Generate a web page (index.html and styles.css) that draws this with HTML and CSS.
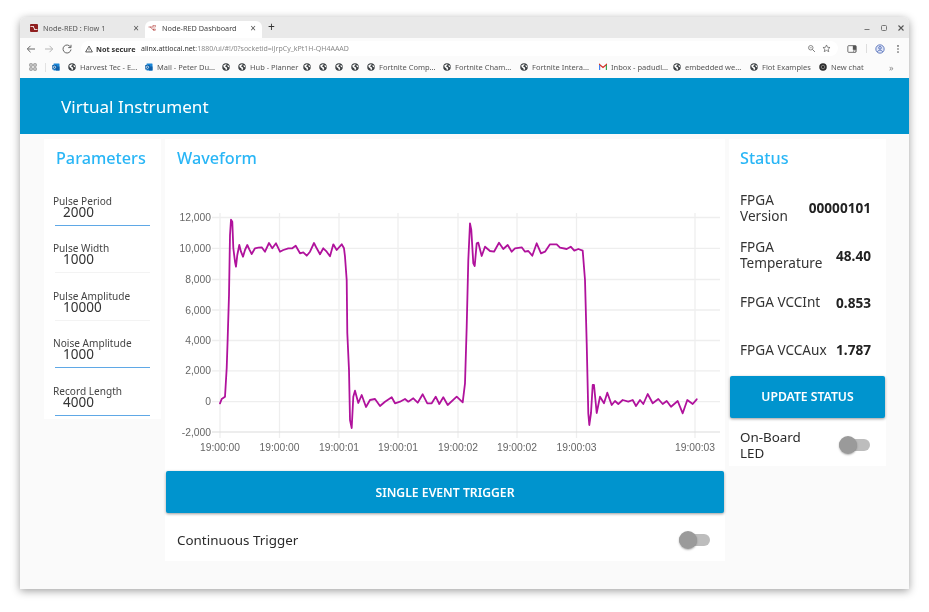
FILE: index.html
```html
<!DOCTYPE html>
<html lang="en">
<head>
<meta charset="utf-8">
<title>Node-RED Dashboard</title>
<link rel="stylesheet" href="styles.css">
</head>
<body>
<svg class="defs" width="0" height="0" aria-hidden="true">
  <symbol id="globe" viewBox="0 0 16 16">
    <circle cx="8" cy="8" r="7.5" fill="#3c4043"/>
    <path d="M2.5 5 L6 3 L9 2.2 L8.5 4.5 L6.5 6 L7 8 L9.5 8.5 L10.5 11 L9 14 L7.5 13.5 L6.5 10.5 L3.5 8.5Z M11 4 L14 5.5 L14.6 9 L12.8 8 L11 6.5Z" fill="#fff"/>
  </symbol>
  <symbol id="outlook" viewBox="0 0 16 16">
    <rect x="3" y="1" width="12" height="14" rx="1" fill="#1a86d8"/>
    <rect x="8" y="7" width="7" height="8" fill="#0f5fa8"/>
    <rect x="0.5" y="4" width="9" height="9" rx="1" fill="#0a5ea8"/>
    <circle cx="5" cy="8.5" r="2.3" fill="none" stroke="#fff" stroke-width="1.4"/>
  </symbol>
</svg>
<div class="window">
  <div class="tabstrip">
    <div class="tab">
      <svg class="favicon" viewBox="0 0 16 16"><rect width="16" height="16" rx="2" fill="#8f1f1f"/><path d="M1 5h4c3 0 3 6 6 6h4M5 5h3M8 11h3" stroke="#fff" stroke-width="1.6" fill="none"/></svg>
      <span class="tab-title">Node-RED : Flow 1</span>
      <span class="tab-x">×</span>
    </div>
    <div class="tab tab-active">
      <svg class="favicon" viewBox="0 0 16 16"><path d="M1 6h3c3 0 3 5 6 5h3M4 6h6" stroke="#b5433f" stroke-width="1.3" fill="none"/><rect x="10" y="3" width="5" height="3" fill="none" stroke="#b5433f"/><rect x="11" y="10" width="4" height="3" fill="none" stroke="#b5433f"/></svg>
      <span class="tab-title">Node-RED Dashboard</span>
      <span class="tab-x">×</span>
    </div>
    <span class="tab-plus">+</span>
    <div class="win-controls">
      <svg class="win-icon" viewBox="0 0 10 10"><path d="M2.5 6.5h5" stroke="#777" stroke-width="1"/></svg>
      <svg class="win-icon" viewBox="0 0 10 10"><rect x="2.5" y="2.5" width="5" height="5" rx="1" fill="none" stroke="#777"/></svg>
      <svg class="win-icon" viewBox="0 0 10 10"><path d="M2.5 2.5l5 5M7.5 2.5l-5 5" stroke="#555" stroke-width="1.1"/></svg>
    </div>
  </div>
  <div class="toolbar">
    <svg class="nav-icon" viewBox="0 0 12 12"><path d="M10 6H2.5M5.5 2.8L2.3 6l3.2 3.2" stroke="#666" stroke-width="1" fill="none"/></svg>
    <svg class="nav-icon" viewBox="0 0 12 12"><path d="M2 6h7.5M6.5 2.8L9.7 6 6.5 9.2" stroke="#b5b5b5" stroke-width="1" fill="none"/></svg>
    <svg class="nav-icon" viewBox="0 0 12 12"><path d="M9.6 4.2A4 4 0 1 0 10 6.5M10 1.8v2.8H7.2" stroke="#666" stroke-width="1" fill="none"/></svg>
    <div class="omnibox">
      <span class="secure-chip">
        <svg class="warn" viewBox="0 0 10 10"><path d="M5 1.3L9.2 8.7H.8Z" fill="none" stroke="#333" stroke-width="1"/><path d="M5 4v2.4M5 7v.8" stroke="#333" stroke-width=".8"/></svg>
        <b>Not secure</b>
      </span>
      <span class="url"><span class="url-host">alinx.attlocal.net</span>:1880/ui/#!/0?socketid=iJrpCy_kPt1H-QH4AAAD</span>
      <svg class="omni-icon omni-first" viewBox="0 0 12 12"><circle cx="5" cy="5" r="3" fill="none" stroke="#666"/><path d="M7.3 7.3L10.5 10.5" stroke="#666" stroke-width="1.2"/><path d="M3.6 5h2.8" stroke="#666" stroke-width=".8"/></svg>
      <svg class="omni-icon" viewBox="0 0 12 12"><path d="M6 1.3l1.4 3.1 3.3.3-2.5 2.2.8 3.3L6 8.5 3 10.2l.8-3.3L1.3 4.7l3.3-.3Z" fill="none" stroke="#555" stroke-width=".9"/></svg>
    </div>
    <svg class="tool-icon tool-panel" viewBox="0 0 12 12"><rect x="1" y="2" width="10" height="8" rx="1" fill="none" stroke="#555"/><rect x="7" y="2" width="4" height="5" fill="#555"/><circle cx="9" cy="8.6" r="1.3" fill="#fff" stroke="#555" stroke-width=".7"/></svg>
    <span class="tool-sep"></span>
    <svg class="tool-icon" viewBox="0 0 12 12"><circle cx="6" cy="6" r="5" fill="#dfe6f7" stroke="#4a66b5"/><circle cx="6" cy="4.6" r="1.6" fill="none" stroke="#4a66b5"/><path d="M2.9 9.4c1-2.6 5.200-2.600 6.200 0" fill="none" stroke="#4a66b5"/></svg>
    <svg class="tool-icon tool-menu" viewBox="0 0 12 12"><circle cx="6" cy="2.300" r="1" fill="#555"/><circle cx="6" cy="6" r="1" fill="#555"/><circle cx="6" cy="9.700" r="1" fill="#555"/></svg>
  </div>
  <div class="bookmarks">
    <svg class="apps" viewBox="0 0 10 10"><path d="M1 1h3v3H1zM6 1h3v3H6zM1 6h3v3H1zM6 6h3v3H6z" fill="none" stroke="#555" stroke-width=".8"/></svg>
    <span class="bm-sep"></span>
    <svg class="bm-icon"><use href="#outlook"/></svg>
    <svg class="bm-icon"><use href="#globe"/></svg><span class="bm-label">Harvest Tec - E...</span>
    <svg class="bm-icon"><use href="#outlook"/></svg><span class="bm-label">Mail - Peter Du...</span>
    <svg class="bm-icon"><use href="#globe"/></svg>
    <svg class="bm-icon"><use href="#globe"/></svg><span class="bm-label bm-hub">Hub - Planner</span>
    <svg class="bm-icon"><use href="#globe"/></svg>
    <svg class="bm-icon"><use href="#globe"/></svg>
    <svg class="bm-icon"><use href="#globe"/></svg>
    <svg class="bm-icon"><use href="#globe"/></svg>
    <svg class="bm-icon"><use href="#globe"/></svg><span class="bm-label bm-comp">Fortnite Comp...</span>
    <svg class="bm-icon"><use href="#globe"/></svg><span class="bm-label">Fortnite Cham...</span>
    <svg class="bm-icon"><use href="#globe"/></svg><span class="bm-label bm-intera">Fortnite Intera...</span>
    <svg class="bm-icon" viewBox="0 0 16 16"><path d="M1 14V3l7 6 7-6v11" fill="none" stroke="#d93025" stroke-width="2.400"/><path d="M1 14V4" stroke="#4285f4" stroke-width="2.400"/><path d="M15 14V4" stroke="#34a853" stroke-width="2.400"/></svg><span class="bm-label bm-inbox">Inbox - padudl...</span>
    <svg class="bm-icon"><use href="#globe"/></svg><span class="bm-label">embedded we...</span>
    <svg class="bm-icon"><use href="#globe"/></svg><span class="bm-label bm-flot">Flot Examples</span>
    <svg class="bm-icon" viewBox="0 0 16 16"><circle cx="8" cy="8" r="7.500" fill="#2b2b2b"/><circle cx="8" cy="8" r="3.500" fill="none" stroke="#999" stroke-width="1.500"/></svg><span class="bm-label bm-chat">New chat</span>
    <span class="bm-more">»</span>
  </div>
  <header class="app-header">Virtual Instrument</header>
  <main class="dashboard">
    <section class="card card-params">
      <h2 class="card-title card-title-params">Parameters</h2>
      <div class="field"><label class="field-label">Pulse Period</label><div class="field-value">2000</div></div>
      <div class="field"><label class="field-label">Pulse Width</label><div class="field-value field-idle">1000</div></div>
      <div class="field"><label class="field-label">Pulse Amplitude</label><div class="field-value field-idle">10000</div></div>
      <div class="field"><label class="field-label">Noise Amplitude</label><div class="field-value">1000</div></div>
      <div class="field field-last"><label class="field-label">Record Length</label><div class="field-value">4000</div></div>
    </section>

    <section class="card card-wave">
      <h2 class="card-title card-title-wave">Waveform</h2>
      <svg class="chart" viewBox="165 205 560 260">
        <g class="grid">
          <path d="M212 217.500H720M212 248.300H720M212 279.500H720M212 310H720M212 340.500H720M212 370.800H720M212 401.600H720"/>
          <path d="M220 213V438M279.500 213V438M339 213V438M398 213V438M458 213V438M517 213V438M576.500 213V438M695 213V438"/>
        </g>
        <path class="axis" d="M212 432H720"/>
        <g class="tick tick-y">
          <text x="211" y="217.500">12,000</text>
          <text x="211" y="248.300">10,000</text>
          <text x="211" y="279.500">8,000</text>
          <text x="211" y="310">6,000</text>
          <text x="211" y="340.500">4,000</text>
          <text x="211" y="370.800">2,000</text>
          <text x="211" y="401.600">0</text>
          <text x="211" y="432">-2,000</text>
        </g>
        <g class="tick tick-x">
          <text x="220" y="451">19:00:00</text>
          <text x="279.500" y="451">19:00:00</text>
          <text x="339" y="451">19:00:01</text>
          <text x="398" y="451">19:00:01</text>
          <text x="458" y="451">19:00:02</text>
          <text x="517" y="451">19:00:02</text>
          <text x="576.500" y="451">19:00:03</text>
          <text x="695" y="451">19:00:03</text>
        </g>
        <polyline class="trace" points="220,403.300 221.700,399 225,396.700 226.700,368 227.700,338 229,295 230,235 231,219.700 232.300,221.700 233.300,248 235,261.700 236,266.700 237.300,255 239.300,245 241,251.700 243,256.700 245,250 247.300,245 249.300,249.300 251.700,254 255,248.300 258.300,247.700 261.700,247.300 265,251.700 269,243 272.300,248.300 276,243.300 280,251.700 283.300,250 288.300,248.300 292.300,248.300 295.700,245.700 300,253.300 303.300,252.300 306.700,255.700 310,251.700 314,243 316.700,248.300 320,254.300 323.300,248.300 326.700,251.700 330,256.300 333.300,244.300 336.700,250 341.700,244.300 344,248.300 345,256.700 346.700,280 347.300,333 349,370 350,420 351.700,428 353.300,396.700 355,390.700 358.300,403 361.700,395 366,407 370,400 375,399 380,406 385,401.700 391.700,397.300 395,403.300 400,401.700 405,399 408.300,401.700 413.300,398.300 417.700,402.700 422.700,394.300 427.300,403.300 431.700,403.300 435.700,396.700 439.300,404 443.300,397.300 447.700,405 456.700,396.700 462.700,402.300 465,383.300 466.700,326.700 468.300,260 470,223.300 471.300,230 473.300,263.300 474.700,266 476.700,243.300 478.300,242.700 481.700,256 485,246.700 490,251 494,251.700 499,242.700 503.300,249 507.700,245 511.700,251.700 515,248.300 521.700,247.300 525,251.700 528.300,251 532.300,255.700 536.700,243.300 541,253.300 545,251.700 550,244.300 556.700,244.300 560,247.700 566.700,249 570.700,246.700 574.300,250.700 578.300,249 582.700,250.700 585,280 586.700,343.300 588.300,413.300 589.300,425 591,413 592.700,385 594,385 596.700,413 600,396.700 604,403.300 607.300,392.700 611.700,405 615,401 618.300,404 622.700,400 628.300,401.700 632.700,400 636,406 640,400 643.300,404 647.700,394 652.700,403.300 658.300,399 662.700,404 666.700,401 671,406.700 677.700,401 682.700,413.300 687.300,400 692.700,404 696.700,399.300"/>
      </svg>
      <button class="btn btn-trigger">SINGLE EVENT TRIGGER</button>
      <div class="switch-row switch-row-wide">
        <span class="switch-text">Continuous Trigger</span>
        <span class="toggle"><span class="toggle-knob"></span></span>
      </div>
    </section>

    <section class="card card-status">
      <h2 class="card-title card-title-status">Status</h2>
      <div class="stat"><span class="stat-label">FPGA<br>Version</span><b class="stat-value">00000101</b></div>
      <div class="stat"><span class="stat-label">FPGA<br>Temperature</span><b class="stat-value">48.40</b></div>
      <div class="stat"><span class="stat-label">FPGA VCCInt</span><b class="stat-value">0.853</b></div>
      <div class="stat"><span class="stat-label">FPGA VCCAux</span><b class="stat-value">1.787</b></div>
      <button class="btn btn-status">UPDATE STATUS</button>
      <div class="switch-row switch-row-status">
        <span class="switch-text switch-text-lines">On-Board<br>LED</span>
        <span class="toggle"><span class="toggle-knob"></span></span>
      </div>
    </section>
  </main>
</div>
</body>
</html>
```

FILE: styles.css
```css
* { box-sizing: border-box; }
html, body { margin: 0; height: 100%; }
body {
  background: #fff;
  padding: 17px 20px 0;
  overflow: hidden;
  font-family: "Noto Sans", "Open Sans", sans-serif;
  color: #222;
}
.defs { display: block; height: 0; }

.window {
  width: 889px;
  height: 572px;
  display: flex;
  flex-direction: column;
  border-radius: 6px 6px 0 0;
  background: #fafafa;
  box-shadow: 0 2px 9px rgba(0, 0, 0, .38);
  overflow: hidden;
  filter: blur(.3px);
}

/* tab strip */
.tabstrip {
  height: 21px;
  flex: none;
  background: #e9e9e9;
  display: flex;
  align-items: flex-end;
  padding-left: 4px;
}
.tab {
  height: 17px;
  width: 121px;
  display: flex;
  align-items: center;
  padding: 0 0 4px 6px;
  font-size: 7.300px;
  color: #555;
}
.tab-active {
  width: 117px;
  background: #fff;
  border-radius: 6px 6px 0 0;
  padding-left: 3px;
  color: #444;
}
.favicon { width: 8px; height: 8px; flex: none; }
.tab-title { margin-left: 5px; white-space: nowrap; flex: 1; }
.tab-active .tab-title { margin-left: 6px; }
.tab-x { width: 8px; margin-right: 5px; font-size: 10px; line-height: 10px; text-align: center; color: #555; }
.tab-plus { height: 17px; line-height: 12px; margin-left: 6px; font-size: 12px; color: #333; }
.win-controls { margin-left: auto; height: 21px; display: flex; align-items: center; gap: 7px; padding-right: 3px; }
.win-icon { width: 10px; height: 10px; }

/* toolbar */
.toolbar {
  height: 20px;
  flex: none;
  background: #fbfbfb;
  display: flex;
  align-items: center;
  padding: 1px 0 0 5px;
}
.nav-icon { width: 12px; height: 12px; margin-right: 6px; flex: none; }
.omnibox {
  margin-left: 2px;
  width: 757px;
  height: 15px;
  border-radius: 8px;
  background: #fff;
  display: flex;
  align-items: center;
  flex: none;
}
.secure-chip { display: flex; align-items: center; width: 60px; padding-left: 4px; font-size: 7.300px; color: #333; flex: none; }
.secure-chip b { margin-left: 3px; white-space: nowrap; font-weight: 700; }
.warn { width: 8px; height: 8px; flex: none; }
.url { font-size: 7px; color: #8a8a8a; white-space: nowrap; flex: 1; }
.url-host { color: #333; }
.omni-icon { width: 9px; height: 9px; margin-right: 7px; flex: none; }
.omni-first { margin-right: 6px; }
.tool-icon { width: 10px; height: 10px; flex: none; }
.tool-panel { margin-left: 9px; }
.tool-sep { width: 1px; height: 9px; background: #ddd; margin: 0 8px 0 9px; flex: none; }
.tool-menu { margin-left: 8px; }

/* bookmarks */
.bookmarks {
  height: 20px;
  flex: none;
  background: #fbfbfb;
  display: flex;
  align-items: center;
  padding: 0 0 2px 9px;
  font-size: 7.500px;
  color: #555;
}
.apps { width: 8px; height: 8px; flex: none; }
.bm-sep { width: 1px; height: 9px; background: #e2e2e2; margin: 0 6px 0 8px; flex: none; }
.bm-icon { width: 8px; height: 8px; flex: none; margin-right: 8px; }
.bm-label { width: 57px; margin: 0 8px 0 -4px; white-space: nowrap; flex: none; }
.bm-hub { width: 45px; }
.bm-comp { width: 56px; }
.bm-intera { width: 59px; }
.bm-inbox { width: 54px; }
.bm-flot { width: 49px; }
.bm-chat { width: 32px; }
.bm-more { margin-left: 18px; font-size: 9px; color: #888; }

/* header */
.app-header {
  height: 56px;
  flex: none;
  background: #0094ce;
  color: #fff;
  font-size: 17.100px;
  line-height: 57px;
  padding-left: 41px;
}

/* cards */
.dashboard {
  flex: 1;
  display: flex;
  align-items: flex-start;
  gap: 4px;
  padding: 5px 0 0 24px;
}
.card { background: #fff; flex: none; }
.card-params { width: 117px; height: 280px; padding: 9px 0 0 9px; }
.card-wave { width: 560px; height: 422px; padding-top: 9px; }
.card-status { width: 157px; height: 327px; padding-top: 9px; }
.card-title {
  margin: 0;
  font-size: 16.200px;
  line-height: 20px;
  font-weight: 500;
  color: #29b6f6;
}
.card-title-params { margin: 0 0 28px 3px; }
.card-title-wave { margin-left: 12px; height: 57px; }
.card-title-status { margin: 0 0 16px 11px; }

/* parameter fields */
.field { width: 95px; margin: 0 0 17.400px 2px; }
.field-last { margin-bottom: 0; }
.field-label {
  display: block;
  margin-left: -2px;
  font-size: 10.100px;
  line-height: 10px;
  color: #444;
  white-space: nowrap;
}
.field-value {
  padding: 0 0 7px 8px;
  font-size: 13.500px;
  line-height: 12px;
  color: #333;
  border-bottom: 1px solid #5fa8e6;
}
.field-idle { border-bottom-color: #f3f3f3; }

/* chart */
.chart { display: block; width: 560px; height: 260px; }
.grid path { stroke: #eeeeee; stroke-width: 1.300; fill: none; }
.axis { stroke: #dcdcdc; stroke-width: 1.200; fill: none; }
.tick { font-family: "Liberation Sans", Arial, sans-serif; font-size: 10.300px; fill: #666; }
.tick-y text { text-anchor: end; dominant-baseline: central; }
.tick-x text { text-anchor: middle; }
.trace { fill: none; stroke: #b0129c; stroke-width: 1.800; stroke-linejoin: round; stroke-linecap: round; }

/* buttons */
.btn {
  display: block;
  height: 42px;
  border: 0;
  border-radius: 2px;
  background: #0094ce;
  color: #fff;
  font-family: inherit;
  font-size: 12.200px;
  font-weight: 600;
  box-shadow: 0 1px 3px rgba(0, 0, 0, .4);
  padding: 0;
}
.btn-trigger { width: 558px; margin: 6px 0 0 1px; }
.btn-status { width: 155px; margin: 2px 0 0 1px; }

/* switches */
.switch-row { display: flex; align-items: center; justify-content: space-between; }
.switch-row-wide { height: 42px; margin-top: 6px; padding: 0 15px 0 12px; }
.switch-row-status { height: 42px; margin-top: 6px; padding: 0 16px 0 11px; }
.switch-text { font-size: 13.400px; color: #2b2b2b; white-space: nowrap; }
.switch-text-lines { line-height: 16px; }
.toggle { position: relative; display: block; width: 31px; height: 12px; border-radius: 6px; background: #bdbdbd; flex: none; }
.toggle-knob {
  position: absolute;
  left: 0;
  top: -3px;
  width: 18px;
  height: 18px;
  border-radius: 50%;
  background: #9a9a9a;
  box-shadow: 0 1px 2px rgba(0, 0, 0, .3);
}

/* status rows */
.stat {
  height: 47.400px;
  display: flex;
  align-items: center;
  justify-content: space-between;
  padding: 0 15px 0 11px;
}
.stat-label { font-size: 13.600px; line-height: 16px; color: #333; white-space: nowrap; }
.stat-value { font-size: 13.600px; font-weight: 700; color: #222; }
```
